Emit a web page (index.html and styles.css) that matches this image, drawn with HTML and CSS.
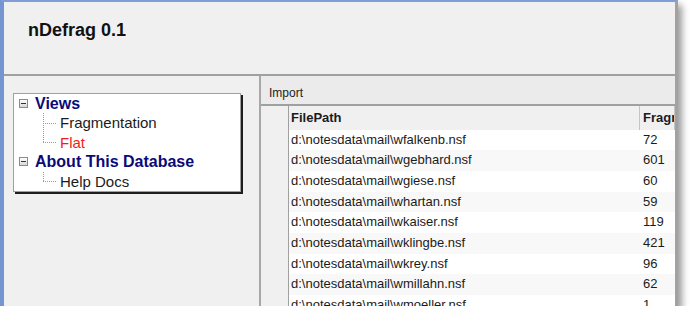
FILE: index.html
```html
<!DOCTYPE html>
<html lang="en">

<head>
    <meta charset="UTF-8">
    <meta name="viewport" content="width=device-width, initial-scale=1.0">
    <title>nDefrag 0.1</title>
    <link rel="stylesheet" href="styles.css">
</head>

<body>
    <div class="window">
        <header class="titlebar">
            <h1>nDefrag 0.1</h1>
        </header>

        <div class="main">
            <aside class="nav">
                <div class="tree">
                    <div class="node">
                        <span class="toggle"></span>
                        <span class="label top">Views</span>
                    </div>
                    <div class="child">
                        <span class="branch"></span>
                        <span class="label">Fragmentation</span>
                    </div>
                    <div class="child last">
                        <span class="branch"></span>
                        <span class="label current">Flat</span>
                    </div>
                    <div class="node">
                        <span class="toggle"></span>
                        <span class="label top">About This Database</span>
                    </div>
                    <div class="child last">
                        <span class="branch"></span>
                        <span class="label">Help Docs</span>
                    </div>
                </div>
            </aside>

            <section class="content">
                <div class="toolbar">Import</div>
                <div class="grid">
                    <div class="grid-row head">
                        <div class="rowhead"></div>
                        <div class="cell">FilePath</div>
                        <div class="cell num">Fragments</div>
                    </div>
                    <div class="grid-row">
                        <div class="rowhead"></div>
                        <div class="cell">d:\notesdata\mail\wfalkenb.nsf</div>
                        <div class="cell num">72</div>
                    </div>
                    <div class="grid-row">
                        <div class="rowhead"></div>
                        <div class="cell">d:\notesdata\mail\wgebhard.nsf</div>
                        <div class="cell num">601</div>
                    </div>
                    <div class="grid-row">
                        <div class="rowhead"></div>
                        <div class="cell">d:\notesdata\mail\wgiese.nsf</div>
                        <div class="cell num">60</div>
                    </div>
                    <div class="grid-row">
                        <div class="rowhead"></div>
                        <div class="cell">d:\notesdata\mail\whartan.nsf</div>
                        <div class="cell num">59</div>
                    </div>
                    <div class="grid-row">
                        <div class="rowhead"></div>
                        <div class="cell">d:\notesdata\mail\wkaiser.nsf</div>
                        <div class="cell num">119</div>
                    </div>
                    <div class="grid-row">
                        <div class="rowhead"></div>
                        <div class="cell">d:\notesdata\mail\wklingbe.nsf</div>
                        <div class="cell num">421</div>
                    </div>
                    <div class="grid-row">
                        <div class="rowhead"></div>
                        <div class="cell">d:\notesdata\mail\wkrey.nsf</div>
                        <div class="cell num">96</div>
                    </div>
                    <div class="grid-row">
                        <div class="rowhead"></div>
                        <div class="cell">d:\notesdata\mail\wmillahn.nsf</div>
                        <div class="cell num">62</div>
                    </div>
                    <div class="grid-row">
                        <div class="rowhead"></div>
                        <div class="cell">d:\notesdata\mail\wmoeller.nsf</div>
                        <div class="cell num">1</div>
                    </div>
                </div>
            </section>
        </div>
    </div>
</body>

</html>
```

FILE: styles.css
```css
body {
    margin: 0;
    background-color: #fff;
    font-family: "Liberation Sans", Arial, sans-serif;
    color: #1b1b1b;
}

.window {
    width: 678px;
    height: 306px;
    box-sizing: border-box;
    border-left: 4px solid #7395d1;
    border-top: 2px solid #7f9ed6;
    border-right: 3px solid #a2a2a2;
    background-color: #f0f0f0;
    box-shadow: 4px 5px 7px rgba(0, 0, 0, 0.4);
    display: flex;
    flex-direction: column;
    overflow: hidden;
}

/* header */
.titlebar {
    height: 74px;
    box-sizing: border-box;
    border-bottom: 2px solid #a0a0a0;
    padding: 18px 0 0 24px;
}

.titlebar h1 {
    margin: 0;
    font-size: 18px;
    line-height: 20px;
    font-weight: bold;
    color: #111;
}

.main {
    flex: 1;
    display: flex;
    min-height: 0;
}

/* left navigator */
.nav {
    width: 246px;
    flex-shrink: 0;
    padding: 17px 0 0 9px;
    border-right: 2px solid #a8a8a8;
}

.tree {
    width: 228px;
    height: 99px;
    box-sizing: border-box;
    border: 1px solid #a0a0a0;
    background-color: #fff;
    box-shadow: 2px 2px 0 #1e1e1e;
}

.node,
.child {
    display: flex;
    align-items: center;
    height: 19.4px;
    line-height: 19.4px;
    white-space: nowrap;
}

.node {
    padding-left: 5px;
}

.toggle {
    width: 9px;
    height: 9px;
    box-sizing: border-box;
    border: 1px solid #8a8a8a;
    margin-right: 7px;
    background:
        linear-gradient(#333, #333) center / 5px 1px no-repeat,
        linear-gradient(#fff, #d8d8d8);
}

.label {
    font-size: 15px;
}

.label.top {
    font-size: 16px;
    font-weight: bold;
    color: #0a0a78;
}

.label.current {
    color: #f21c1c;
}

.child {
    align-items: stretch;
    padding-left: 29px;
}

.branch {
    width: 14px;
    margin-right: 3px;
    background:
        repeating-linear-gradient(to right, #9a9a9a 0 1px, transparent 1px 2px) 0 50% / 100% 1px no-repeat,
        repeating-linear-gradient(to bottom, #9a9a9a 0 1px, transparent 1px 2px) 0 0 / 1px 100% no-repeat;
}

.child.last .branch {
    background:
        repeating-linear-gradient(to right, #9a9a9a 0 1px, transparent 1px 2px) 0 50% / 100% 1px no-repeat,
        repeating-linear-gradient(to bottom, #9a9a9a 0 1px, transparent 1px 2px) 0 0 / 1px 50% no-repeat;
}

/* right content */
.content {
    flex: 1;
    min-width: 0;
    display: flex;
    flex-direction: column;
    background-color: #fff;
    overflow: hidden;
}

.toolbar {
    height: 30px;
    box-sizing: border-box;
    padding: 6px 0 0 8px;
    line-height: 22px;
    font-size: 12px;
    background-color: #ebebeb;
    border-bottom: 2px solid #a0a0a0;
    color: #222;
}

.grid-row {
    display: grid;
    grid-template-columns: 28px 351px 1fr;
    height: 20.7px;
    line-height: 20.7px;
    font-size: 13px;
    white-space: nowrap;
}

.grid-row:nth-child(odd) .cell {
    background-color: #f8f8f8;
}

.grid-row.head {
    height: 23.6px;
    line-height: 23.6px;
    font-weight: bold;
}

.grid-row.head .cell {
    background-color: #f0f0f0;
    border-right: 1px solid #c4c4c4;
    box-sizing: border-box;
}

.rowhead {
    background-color: #f0f0f0;
    border-right: 1px solid #a0a0a0;
}

.cell {
    padding-left: 2px;
    overflow: hidden;
}

.cell.num {
    padding-left: 3px;
}
```
